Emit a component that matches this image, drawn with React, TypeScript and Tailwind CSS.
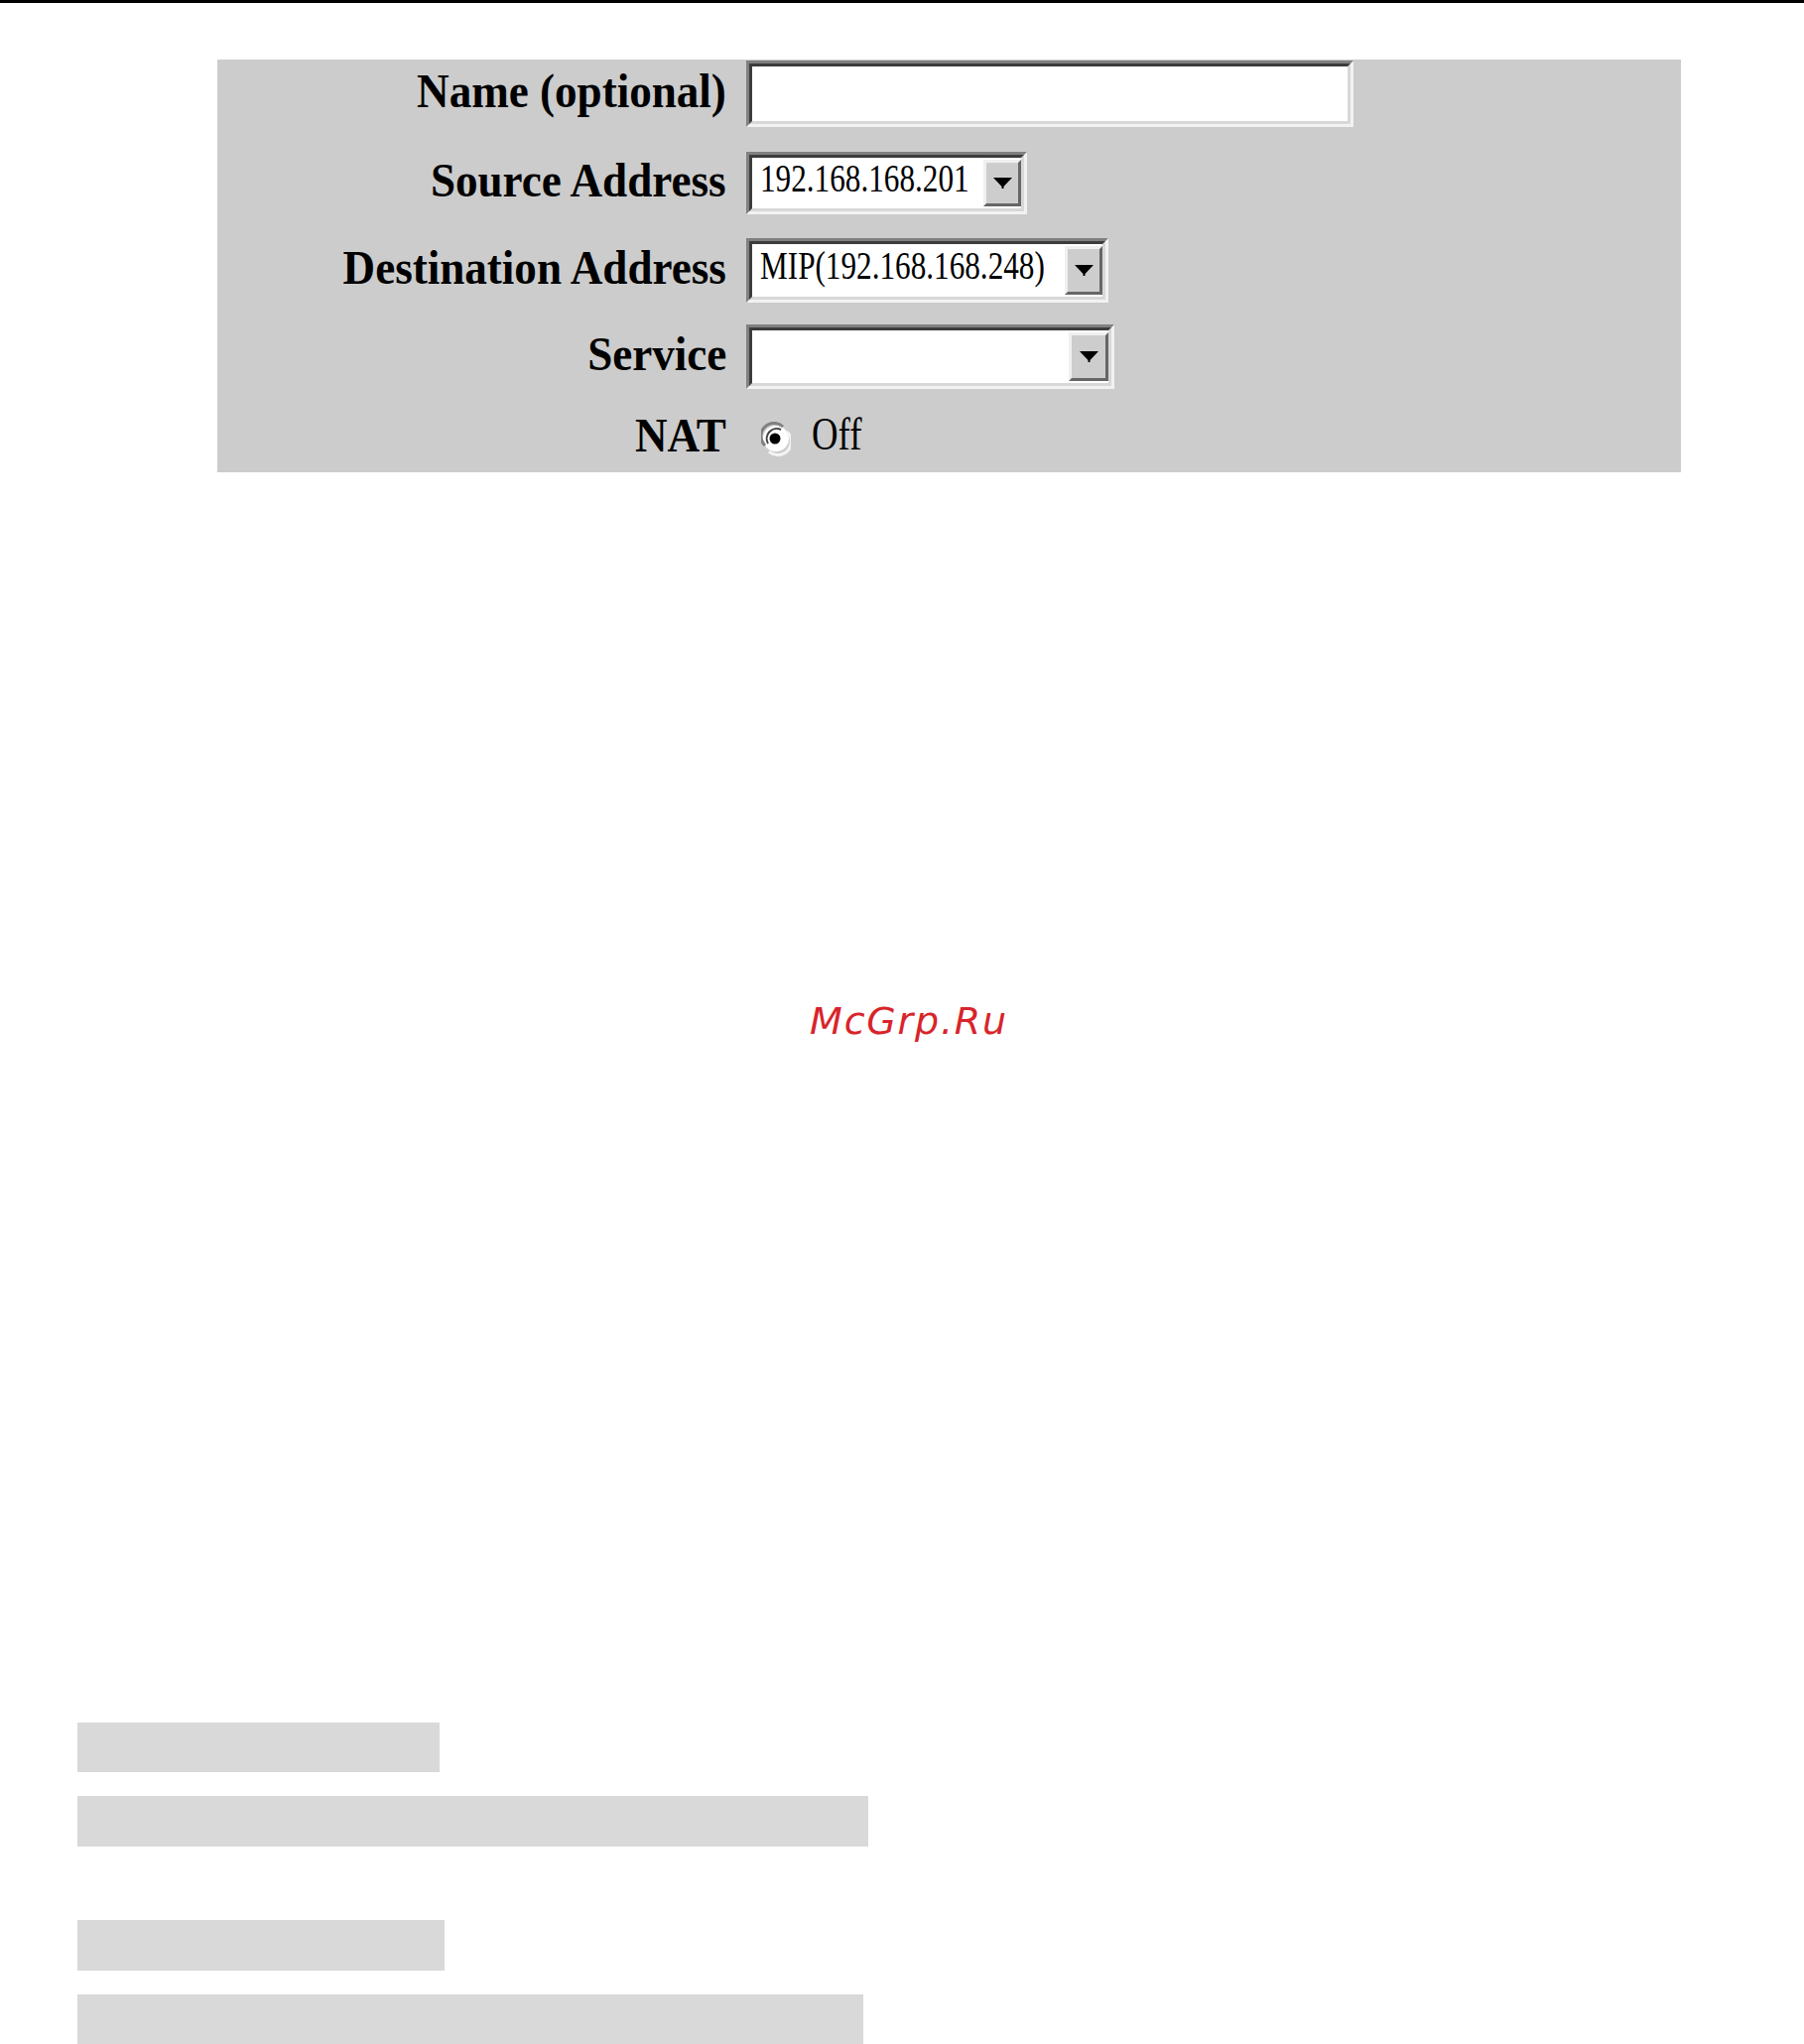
import React from "react";

const Label = ({ children }: { children: React.ReactNode }) => (
  <div className="w-[513px] shrink-0 pb-[7px] text-right">
    <span className="inline-block origin-right scale-x-[0.92] whitespace-nowrap font-['Liberation_Serif','Times_New_Roman',serif] text-[49px] font-bold leading-none text-black">
      {children}
    </span>
  </div>
);

const Arrow = () => (
  <svg width="19" height="11" viewBox="0 0 19 11">
    <polygon points="0,0 19,0 10.5,9 10.5,11 8.5,11 8.5,9" fill="#000" />
  </svg>
);

const SelectBox = ({ className, value, buttonClass }: { className: string; value: string; buttonClass: string }) => (
  <div
    className={`ml-[20px] flex shrink-0 border-[3px] border-t-[#808080] border-l-[#808080] border-r-[#f2f2f2] border-b-[#f2f2f2] ${className}`}
  >
    <div className="flex min-w-0 flex-1 border-[3px] border-t-[#3c3c3c] border-l-[#3c3c3c] border-r-[#d8d8d8] border-b-[#d8d8d8] bg-white">
      <div className="flex min-w-0 flex-1 items-center pb-[9px] pl-[8px]">
        <span className="inline-block origin-left scale-x-[0.78] whitespace-nowrap font-['Liberation_Serif','Times_New_Roman',serif] text-[40px] leading-none text-black">
          {value}
        </span>
      </div>
      <div
        className={`my-[2px] flex shrink-0 items-center justify-center border-[3px] border-t-[#f0f0f0] border-l-[#f0f0f0] border-r-[#666666] border-b-[#666666] bg-[#cdcdcd] ${buttonClass}`}
      >
        <Arrow />
      </div>
    </div>
  </div>
);

export default function App() {
  return (
    <div className="relative min-h-[2060px] w-full bg-white">
      <div className="h-[3px] w-full bg-black" />

      <div className="ml-[219px] mt-[57px] flex h-[416px] w-[1475px] flex-col bg-[#cccccc]">
        <div className="mt-[1px] flex h-[67px] items-center">
          <Label>Name (optional)</Label>
          <div className="ml-[20px] flex h-full w-[612px] shrink-0 border-[3px] border-t-[#808080] border-l-[#808080] border-r-[#f2f2f2] border-b-[#f2f2f2]">
            <div className="flex-1 border-[3px] border-t-[#3c3c3c] border-l-[#3c3c3c] border-r-[#d8d8d8] border-b-[#d8d8d8] bg-white" />
          </div>
        </div>

        <div className="mt-[25px] flex h-[63px] items-center">
          <Label>Source Address</Label>
          <SelectBox className="h-full w-[283px]" value="192.168.168.201" buttonClass="w-[38px]" />
        </div>

        <div className="mt-[24px] flex h-[65px] items-center">
          <Label>Destination Address</Label>
          <SelectBox className="h-full w-[365px]" value="MIP(192.168.168.248)" buttonClass="w-[38px]" />
        </div>

        <div className="mt-[22px] flex h-[65px] items-center">
          <Label>Service</Label>
          <SelectBox className="h-full w-[371px]" value="" buttonClass="w-[40px]" />
        </div>

        <div className="mt-[28px] flex h-[44px] items-center">
          <Label>NAT</Label>
          <div className="ml-[20px] flex items-center">
            <svg className="ml-[15px]" width="30" height="35" viewBox="0 0 30 35">
              <circle cx="15" cy="17" r="13" fill="#fff" />
              <path d="M4 24 A13 13 0 0 1 22 5" fill="none" stroke="#808080" strokeWidth="3" />
              <path d="M7 22 A10 10 0 0 1 20 8" fill="none" stroke="#404040" strokeWidth="2" />
              <path d="M26 10 A13 13 0 0 1 8 30" fill="none" stroke="#f4f4f4" strokeWidth="3" />
              <circle cx="14" cy="17" r="5.5" fill="#000" />
            </svg>
            <div className="ml-[21px] pb-[9px]">
              <span className="inline-block origin-left scale-x-[0.8] whitespace-nowrap font-['Liberation_Serif','Times_New_Roman',serif] text-[46px] leading-none text-black">
                Off
              </span>
            </div>
          </div>
        </div>
      </div>

      <div className="mt-[534px] flex h-[40px] justify-center pl-[14px]">
        <span className="font-['DejaVu_Sans',sans-serif] text-[38px] italic leading-none tracking-[1.8px] text-[#d8242a]">
          McGrp.Ru
        </span>
      </div>

      <div className="ml-[78px] mt-[686px] flex flex-col">
        <div className="h-[50px] w-[365px] bg-[#d9d9d9]" />
        <div className="mt-[24px] h-[51px] w-[797px] bg-[#d9d9d9]" />
        <div className="mt-[74px] h-[51px] w-[370px] bg-[#d9d9d9]" />
        <div className="mt-[24px] h-[50px] w-[792px] bg-[#d9d9d9]" />
      </div>
    </div>
  );
}
